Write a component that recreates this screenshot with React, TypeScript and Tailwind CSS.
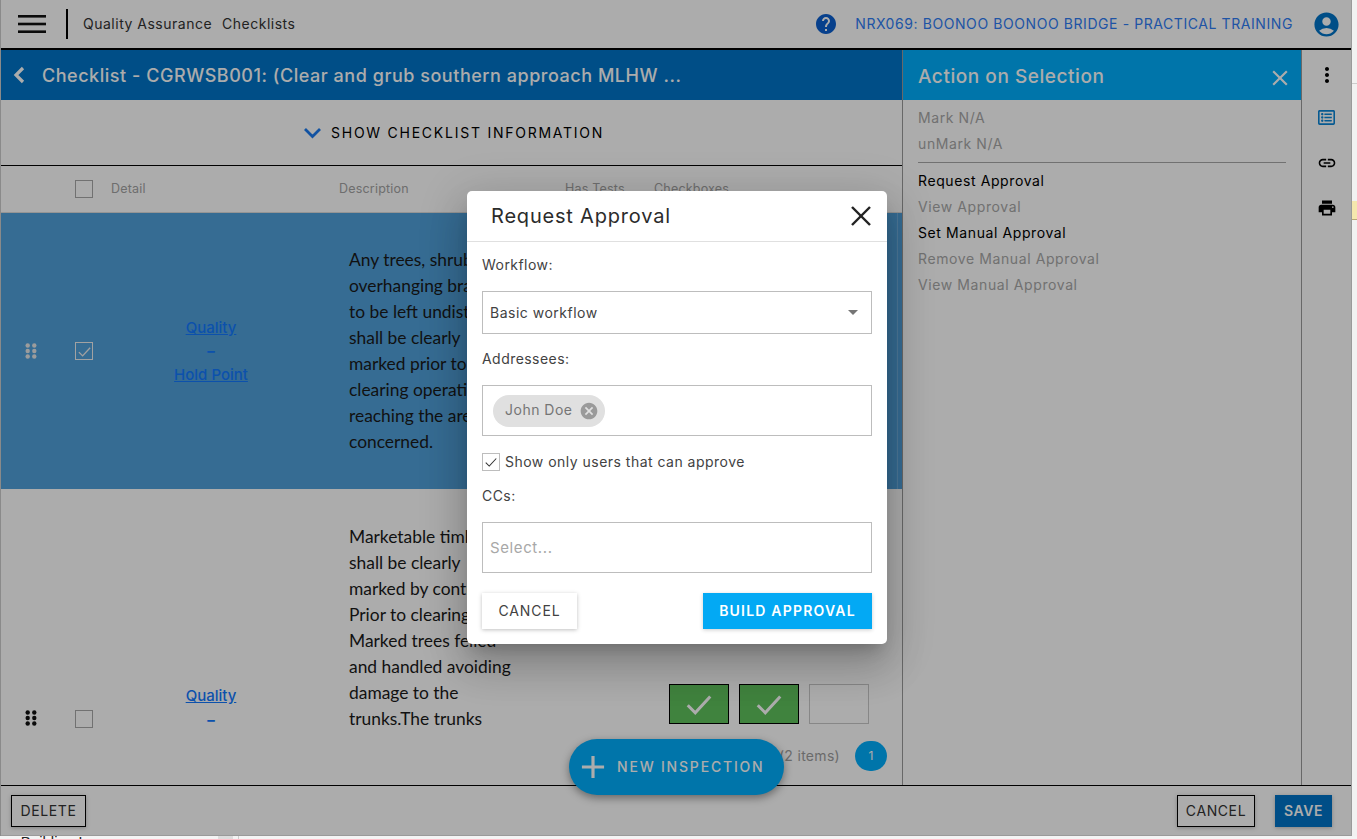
import React from 'react';
import { MdHelp, MdAccountCircle, MdMoreVert, MdLink, MdPrint, MdCancel, MdClose, MdAdd } from 'react-icons/md';
import { FaRegListAlt } from 'react-icons/fa';

const row1 = ['Any trees, shrubs and', 'overhanging branches', 'to be left undisturbed', 'shall be clearly', 'marked prior to', 'clearing operations', 'reaching the area', 'concerned.'];
const row2 = ['Marketable timber', 'shall be clearly', 'marked by contractor.', 'Prior to clearing.', 'Marked trees felled', 'and handled avoiding', 'damage to the', 'trunks.The trunks'];

const DragDots = ({ className }: { className: string }) => (
  <svg width="12" height="16" viewBox="0 0 12 16" className={className} fill="currentColor">
    {[2.5, 8, 13.5].map((y) => (
      <React.Fragment key={y}>
        <circle cx="2.7" cy={y} r="2.2" />
        <circle cx="9.3" cy={y} r="2.2" />
      </React.Fragment>
    ))}
  </svg>
);

const Check = ({ size, width, className }: { size: number; width: number; className: string }) => (
  <svg width={size} height={size} viewBox="0 0 24 24" className={className} fill="none" stroke="currentColor" strokeWidth={width}>
    <polyline points="3,13 9,19 21,6" />
  </svg>
);

const CheckBox = () => <div className="w-[18px] h-[18px] border border-[#a8a8a8] shrink-0" />;

const Lines = ({ lines }: { lines: string[] }) => (
  <div className="font-[Lato,sans-serif] text-[17.4px] leading-[26px] text-[#1a1a1a] whitespace-nowrap">
    {lines.map((l) => (
      <div key={l}>{l}</div>
    ))}
  </div>
);

const Item = ({ label, on }: { label: string; on?: boolean }) => (
  <div className={`h-[26px] leading-[26px] text-[14px] tracking-[0.6px] ${on ? 'text-black' : 'text-[#a8a8a8]'}`}>{label}</div>
);

const Field = ({ label, className }: { label: string; className: string }) => (
  <div className={`text-[14px] leading-[18px] tracking-[0.45px] text-[#424242] ${className}`}>{label}</div>
);

const ApprovalDialog = () => (
  <div className="ml-[466px] mt-[191px] w-[420px] h-[453px] bg-white rounded-[5px] flex flex-col shadow-[0_11px_15px_-7px_rgba(0,0,0,0.2),0_24px_38px_3px_rgba(0,0,0,0.14),0_9px_46px_8px_rgba(0,0,0,0.12)]">
    <div className="h-[51px] shrink-0 border-b border-[#e0e0e0] flex items-center justify-between pl-[24px] pr-[14px]">
      <span className="text-[20px] tracking-[0.8px] text-[#2b2b2b]">Request Approval</span>
      <svg width="24" height="24" viewBox="0 0 24 24" className="text-[#222]" stroke="currentColor" strokeWidth="2.4">
        <line x1="3" y1="3" x2="21" y2="21" />
        <line x1="21" y1="3" x2="3" y2="21" />
      </svg>
    </div>
    <div className="px-[15px] flex flex-col">
      <Field label="Workflow:" className="mt-[14px]" />
      <div className="mt-[17px] h-[43px] border border-[#bdbdbd] flex items-center justify-between pl-[7px] pr-[13px] text-[14px] tracking-[0.5px] text-[#424242]">
        <span>Basic workflow</span>
        <span className="w-0 h-0 border-l-[5px] border-r-[5px] border-t-[5px] border-l-transparent border-r-transparent border-t-[#757575]" />
      </div>
      <Field label="Addressees:" className="mt-[16px]" />
      <div className="mt-[17px] h-[51px] border border-[#bdbdbd] flex items-center pl-[10px]">
        <div className="h-[32px] w-[112px] rounded-full bg-[#e0e0e0] flex items-center justify-between pl-[12px] pr-[6px] text-[14px] tracking-[0.5px] text-[#757575]">
          <span className="pb-[2px]">John Doe</span>
          <MdCancel size={20} className="text-[#9a9a9a]" />
        </div>
      </div>
      <div className="mt-[17px] flex items-center gap-[5px] h-[18px]">
        <div className="w-[18px] h-[18px] border border-[#bdbdbd] flex items-center justify-center">
          <Check size={14} width={1.8} className="text-[#333]" />
        </div>
        <span className="pb-px text-[14px] tracking-[0.48px] text-[#424242]">Show only users that can approve</span>
      </div>
      <Field label="CCs:" className="mt-[16px]" />
      <div className="mt-[17px] h-[51px] border border-[#bdbdbd] flex items-center pl-[7px] pt-px text-[15px] tracking-[0.6px] text-[#a8a8a8]">Select...</div>
      <div className="mt-[20px] flex justify-between">
        <div className="w-[95px] h-[36px] pb-px flex items-center justify-center bg-white text-[14px] tracking-[0.9px] text-[#424242] shadow-[0_1px_4px_rgba(0,0,0,0.25)]">CANCEL</div>
        <div className="w-[169px] h-[36px] pb-px flex items-center justify-center bg-[#03a9f4] text-[14px] font-semibold tracking-[1.2px] text-white shadow-[0_1px_4px_rgba(0,0,0,0.2)]">BUILD APPROVAL</div>
      </div>
    </div>
  </div>
);

export default function App() {
  return (
    <div className="w-[1357px] h-[839px] overflow-hidden bg-white font-[Inter,sans-serif] flex flex-col">
      <div className="flex h-[836px] shrink-0">
        <div className="w-px bg-[#8a8a8a] shrink-0" />
        <div className="relative w-[1351px] bg-white border-r border-b border-[#9a9a9a] flex flex-col shrink-0">
          {/* top bar */}
          <div className="h-[48px] shrink-0 flex items-center">
            <svg width="28" height="20" viewBox="0 0 28 20" className="ml-[17px] text-[#111]" fill="currentColor">
              <rect x="0" y="1" width="28" height="2.6" />
              <rect x="0" y="8.7" width="28" height="2.6" />
              <rect x="0" y="16.4" width="28" height="2.6" />
            </svg>
            <div className="ml-[20px] w-[2px] h-[30px] bg-black" />
            <span className="ml-[15px] pb-px text-[14px] tracking-[0.5px] text-[#333]">Quality Assurance</span>
            <span className="ml-[10px] pb-px text-[14px] tracking-[0.5px] text-[#333]">Checklists</span>
            <MdHelp size={24} className="ml-auto text-[#0b5fd0]" />
            <span className="ml-[17px] pb-px text-[14px] tracking-[0.58px] text-[#2f7df5] whitespace-nowrap">NRX069: BOONOO BOONOO BRIDGE - PRACTICAL TRAINING</span>
            <MdAccountCircle size={29} className="ml-[19px] mr-[10px] text-[#0074c8]" />
          </div>
          <div className="h-[2px] bg-black shrink-0" />

          <div className="flex flex-1 min-h-0">
            {/* main column */}
            <div className="w-[901px] shrink-0 flex flex-col">
              <div className="h-[50px] shrink-0 bg-[#0074c8] flex items-center text-white">
                <svg width="14" height="20" viewBox="0 0 14 20" className="ml-[11px]" fill="none" stroke="currentColor" strokeWidth="3.2">
                  <polyline points="11,3 4,10 11,17" />
                </svg>
                <span className="ml-[16px] text-[18px] font-medium tracking-[0.53px] whitespace-nowrap">Checklist - CGRWSB001: (Clear and grub southern approach MLHW ...</span>
              </div>
              <div className="h-[66px] shrink-0 border-b border-black flex items-center pl-[302px] gap-[9px]">
                <svg width="19" height="12" viewBox="0 0 19 12" fill="none" stroke="#1a7af0" strokeWidth="2.8">
                  <polyline points="2,2 9.5,9.5 17,2" />
                </svg>
                <span className="pb-px text-[14px] tracking-[1.75px] text-black">SHOW CHECKLIST INFORMATION</span>
              </div>
              <div className="h-[47px] shrink-0 relative flex items-center text-[12.5px] tracking-[0.2px] text-[#a3a3a3] border-b border-[#dddddd]">
                <div className="ml-[74px]"><CheckBox /></div>
                <span className="ml-[18px] w-[228px]">Detail</span>
                <span className="w-[226px]">Description</span>
                <span className="w-[89px]">Has Tests</span>
                <span>Checkboxes</span>
              </div>
              {/* selected row */}
              <div className="h-[276px] shrink-0 bg-[#50a0db] flex items-center">
                <DragDots className="ml-[24px] text-[#e8e8e8]" />
                <div className="ml-[38px] w-[18px] h-[18px] border border-[#f0f0f0] flex items-center justify-center">
                  <Check size={15} width={2.2} className="text-[#eeeeee]" />
                </div>
                <div className="w-[256px] pr-[20px] text-center text-[15px] font-medium leading-[23.5px] text-[#1279ff]">
                  <div className="underline">Quality</div>
                  <div className="font-bold">–</div>
                  <div className="underline">Hold Point</div>
                </div>
                <Lines lines={row1} />
                <div className="ml-auto mr-[4px] w-px h-full bg-white/20" />
              </div>
              {/* second row */}
              <div className="relative flex-1 min-h-0 flex items-start">
                <DragDots className="ml-[24px] mt-[221px] text-[#111]" />
                <div className="ml-[38px] mt-[221px]"><CheckBox /></div>
                <div className="w-[256px] pr-[20px] mt-[195px] text-center text-[15px] font-medium leading-[24px] text-[#1279ff]">
                  <div className="underline">Quality</div>
                  <div className="font-bold">–</div>
                </div>
                <div className="mt-[35px] w-[320px]"><Lines lines={row2} /></div>
                <div className="mt-[195px] flex gap-[10px]">
                  <div className="w-[60px] h-[40px] bg-[#5fc25d] border border-black flex items-center justify-center"><Check size={30} width={2.4} className="text-white" /></div>
                  <div className="w-[60px] h-[40px] bg-[#5fc25d] border border-black flex items-center justify-center"><Check size={30} width={2.4} className="text-white" /></div>
                  <div className="w-[60px] h-[40px] border border-[#c8c8c8]" />
                </div>
                <div className="absolute right-[15px] bottom-[14px] flex items-center gap-[15px]">
                  <span className="pb-[2px] text-[14px] tracking-[0.3px] text-[#9e9e9e]">(2 items)</span>
                  <div className="w-[32px] h-[30px] rounded-full bg-[#00aefc] flex items-center justify-center text-[12px] text-white">1</div>
                </div>
              </div>
            </div>

            {/* action panel */}
            <div className="w-[399px] shrink-0 border-l border-[#9a9a9a] flex flex-col">
              <div className="h-[50px] shrink-0 bg-[#00aefc] flex items-center justify-between pl-[15px] pr-[8px] pt-[5px] text-white">
                <span className="text-[19px] font-medium tracking-[0.55px]">Action on Selection</span>
                <MdClose size={26} />
              </div>
              <div className="px-[15px] pt-[5px]">
                <Item label="Mark N/A" />
                <Item label="unMark N/A" />
                <div className="mt-[5px] mb-[5px] h-px bg-[#a8a8a8]" />
                <Item label="Request Approval" on />
                <Item label="View Approval" />
                <Item label="Set Manual Approval" on />
                <Item label="Remove Manual Approval" />
                <Item label="View Manual Approval" />
              </div>
            </div>

            {/* right rail */}
            <div className="flex-1 border-l border-[#9a9a9a] flex flex-col items-center pt-[13px]">
              <MdMoreVert size={24} className="text-black" />
              <FaRegListAlt size={17} className="mt-[22px] text-[#0a86d8]" />
              <MdLink size={20} className="mt-[27px] text-black" />
              <MdPrint size={20} className="mt-[25px] text-black" />
            </div>
          </div>

          {/* footer */}
          <div className="h-[50px] shrink-0 border-t border-black flex items-center px-[10px] text-[14px] tracking-[0.6px]">
            <div className="w-[75px] h-[32px] border border-black flex items-center justify-center text-[#333] shadow-[0_1px_4px_rgba(0,0,0,0.25)]">DELETE</div>
            <div className="ml-auto w-[78px] h-[32px] border border-black flex items-center justify-center text-[#333] shadow-[0_1px_4px_rgba(0,0,0,0.25)]">CANCEL</div>
            <div className="ml-[20px] mr-[9px] w-[57px] h-[32px] bg-[#0074c8] flex items-center justify-center font-semibold text-white shadow-[0_1px_4px_rgba(0,0,0,0.25)]">SAVE</div>
          </div>

          {/* floating action button */}
          <div className="absolute left-[568px] top-[739px] w-[215px] h-[56px] rounded-full bg-[#00aefc] flex items-center pl-[5px] text-white shadow-[0_3px_8px_rgba(0,0,0,0.4)]">
            <MdAdd size={38} />
            <span className="ml-[5px] pb-px text-[14px] font-medium tracking-[1.8px] whitespace-nowrap">NEW INSPECTION</span>
          </div>

          {/* modal backdrop */}
          <div className="absolute inset-0 bg-black/[0.325]">
            <ApprovalDialog />
          </div>
        </div>
        {/* page behind */}
        <div className="flex-1 flex flex-col bg-[#f2f2f2]">
          <div className="mt-[83px] h-px bg-[#cccccc]" />
          <div className="mt-[117px] h-[19px] bg-[#f5e7ad] border-b border-[#b8a878]" />
        </div>
      </div>
      <div className="flex-1 overflow-hidden flex bg-[#f4f4f4]">
        <div className="w-[218px] font-[Liberation_Sans,sans-serif] text-[15px] leading-[11px] text-[#222] whitespace-nowrap">ue Building Lon</div>
        <div className="w-[15px] bg-[#dddddd]" />
        <div className="ml-[5px] w-px bg-[#cccccc]" />
      </div>
    </div>
  );
}
